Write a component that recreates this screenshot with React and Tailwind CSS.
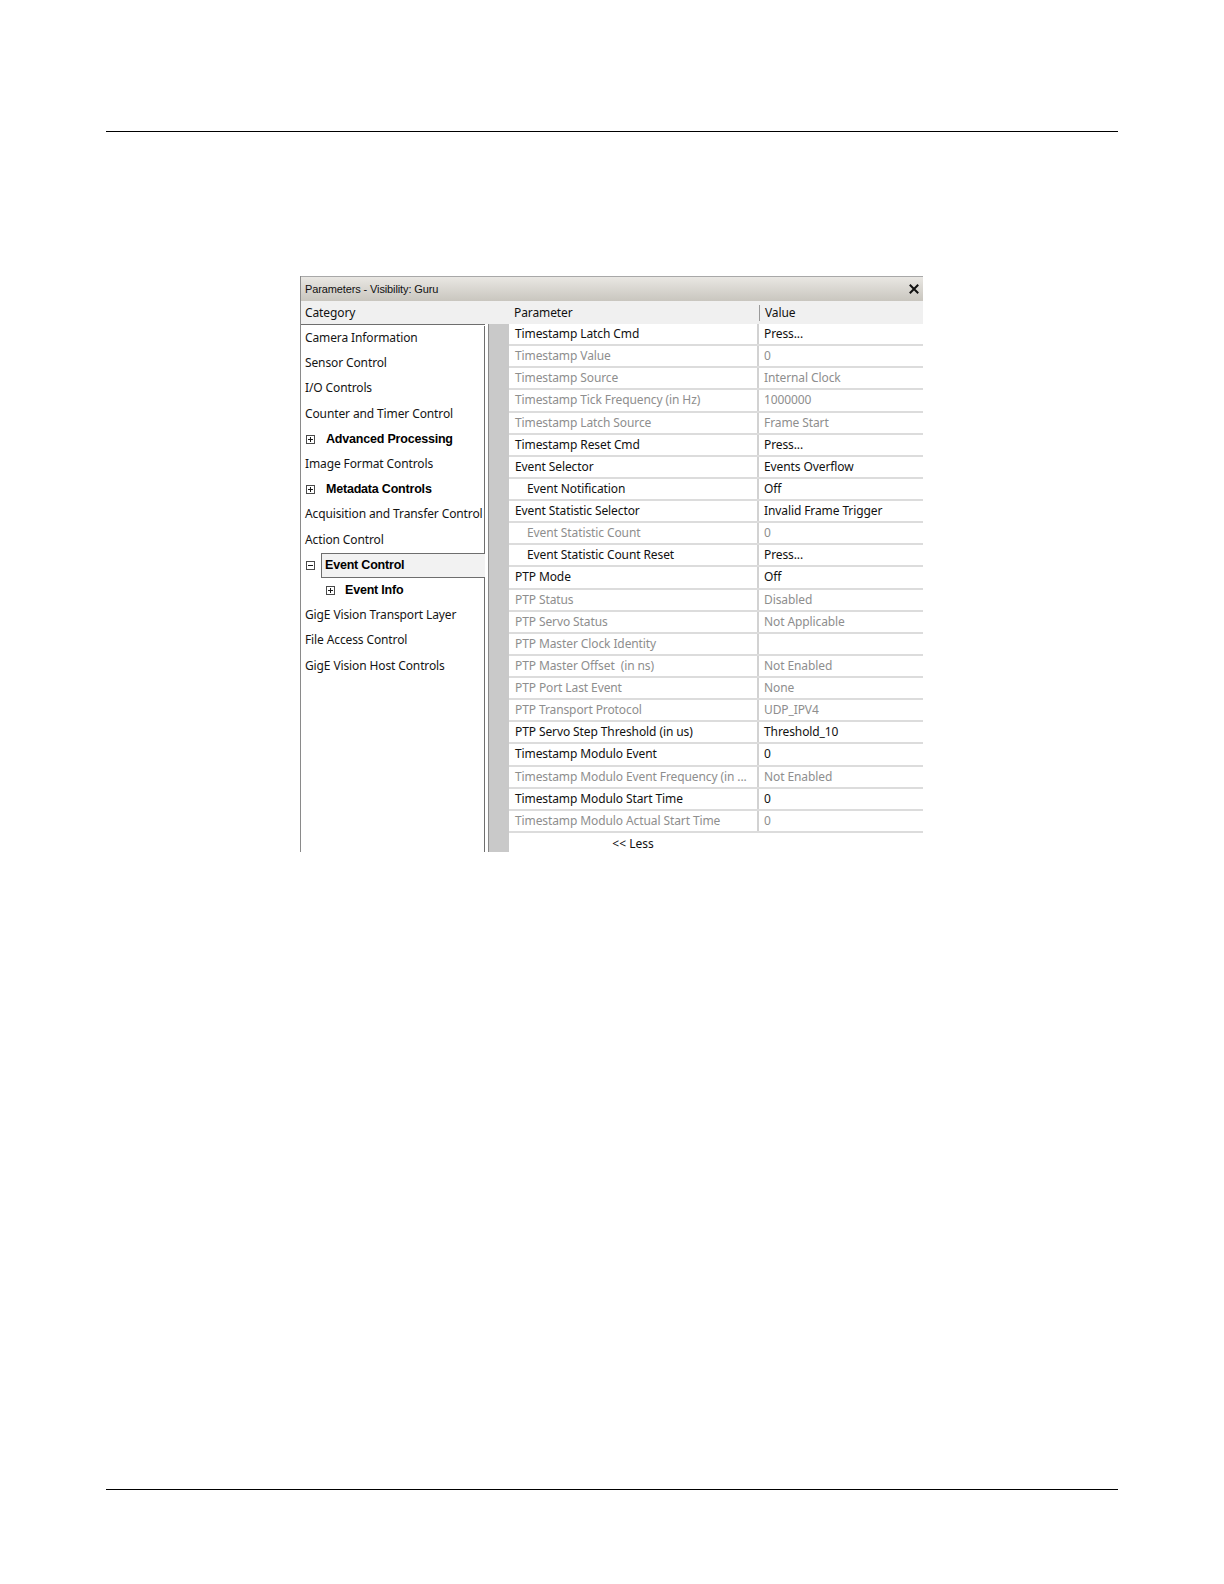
import React from "react";

const categories = [
  { label: "Camera Information" },
  { label: "Sensor Control" },
  { label: "I/O Controls" },
  { label: "Counter and Timer Control" },
  { label: "Advanced Processing", icon: "plus", bold: true },
  { label: "Image Format Controls" },
  { label: "Metadata Controls", icon: "plus", bold: true },
  { label: "Acquisition and Transfer Control" },
  { label: "Action Control" },
  { label: "Event Control", icon: "minus", bold: true, selected: true },
  { label: "Event Info", icon: "plus", bold: true, child: true },
  { label: "GigE Vision Transport Layer" },
  { label: "File Access Control" },
  { label: "GigE Vision Host Controls" },
];

// [name, value, enabled, indented]
const params = [
  ["Timestamp Latch Cmd", "Press...", true],
  ["Timestamp Value", "0", false],
  ["Timestamp Source", "Internal Clock", false],
  ["Timestamp Tick Frequency (in Hz)", "1000000", false],
  ["Timestamp Latch Source", "Frame Start", false],
  ["Timestamp Reset Cmd", "Press...", true],
  ["Event Selector", "Events Overflow", true],
  ["Event Notification", "Off", true, true],
  ["Event Statistic Selector", "Invalid Frame Trigger", true],
  ["Event Statistic Count", "0", false, true],
  ["Event Statistic Count Reset", "Press...", true, true],
  ["PTP Mode", "Off", true],
  ["PTP Status", "Disabled", false],
  ["PTP Servo Status", "Not Applicable", false],
  ["PTP Master Clock Identity", "", false],
  ["PTP Master Offset  (in ns)", "Not Enabled", false],
  ["PTP Port Last Event", "None", false],
  ["PTP Transport Protocol", "UDP_IPV4", false],
  ["PTP Servo Step Threshold (in us)", "Threshold_10", true],
  ["Timestamp Modulo Event", "0", true],
  ["Timestamp Modulo Event Frequency (in ...", "Not Enabled", false],
  ["Timestamp Modulo Start Time", "0", true],
  ["Timestamp Modulo Actual Start Time", "0", false],
];

const uiFont = { fontFamily: '"Noto Sans", "Open Sans", sans-serif' };

function TreeBox({ type }) {
  return (
    <svg width="9" height="9" viewBox="0 0 9 9" className="shrink-0">
      <rect x="0.5" y="0.5" width="8" height="8" fill="white" stroke="#4a4a4a" />
      <line x1="2" y1="4.5" x2="7" y2="4.5" stroke="#1a1a1a" />
      {type === "plus" && <line x1="4.5" y1="2" x2="4.5" y2="7" stroke="#1a1a1a" />}
    </svg>
  );
}

function CategoryRow({ item }) {
  const label = item.bold ? (
    <span className="font-['Liberation_Sans',Arial,sans-serif] font-bold text-[12.5px] tracking-[-0.2px] text-black whitespace-nowrap">
      {item.label}
    </span>
  ) : (
    <span className="text-[12px] tracking-[-0.12px] text-[#151515] whitespace-nowrap">{item.label}</span>
  );

  if (item.selected) {
    return (
      <div className="h-[25.2px] shrink-0 flex items-stretch">
        <div className="w-[20px] flex items-center pl-[5px]">
          <TreeBox type={item.icon} />
        </div>
        <div className="flex-1 flex items-center pl-[3px] bg-[#f2f2f2] border border-r-0 border-[#6e6e6e]">
          {label}
        </div>
      </div>
    );
  }

  return (
    <div className="h-[25.2px] shrink-0 flex items-center border-r border-[#6e6e6e] overflow-hidden">
      {item.icon ? (
        <div className={`flex items-center ${item.child ? "pl-[25px] gap-[10px]" : "pl-[5px] gap-[11px]"}`}>
          <TreeBox type={item.icon} />
          {label}
        </div>
      ) : (
        <div className="pl-[4px] pb-[5px]">{label}</div>
      )}
    </div>
  );
}

function ParamRow({ row }) {
  const [name, value, enabled, indent] = row;
  const color = enabled ? "text-[#111]" : "text-[#8e8e8e]";
  return (
    <div className={`h-[22.14px] shrink-0 flex border-b-2 border-[#dcdcdc] text-[12px] tracking-[-0.1px] ${color}`}>
      <div className={`w-[248px] flex items-center whitespace-pre overflow-hidden ${indent ? "pl-[18px]" : "pl-[6px]"}`}>
        {name}
      </div>
      <div className="flex-1 flex items-center pl-[5px] border-l-2 border-[#d2d2d2] whitespace-nowrap">
        {value}
      </div>
    </div>
  );
}

export default function App() {
  return (
    <div className="w-[1224px] h-[1584px] bg-white flex flex-col" style={uiFont}>
      <div className="mt-[131px] ml-[106px] w-[1012px] h-px bg-black" />

      <div className="mt-[144px] ml-[300px] w-[623px] h-[576px] flex flex-col border-l border-[#8a8a8a] overflow-hidden">
        {/* title bar */}
        <div className="h-[25px] shrink-0 flex items-center justify-between pl-[4px] pr-[4px] border-t border-[#a8a8a8] bg-gradient-to-b from-[#e9e7e3] to-[#c9c6bf]">
          <span className="font-['Liberation_Sans',Arial,sans-serif] text-[11px] tracking-[-0.12px] text-[#111]">
            Parameters - Visibility: Guru
          </span>
          <svg width="10" height="10" viewBox="0 0 10 10">
            <path d="M1.5 1.5 L8.5 8.5 M8.5 1.5 L1.5 8.5" stroke="#111" strokeWidth="2" strokeLinecap="square" />
          </svg>
        </div>

        {/* column headers */}
        <div className="h-[23px] shrink-0 flex bg-[#f0f0f0] text-[12px] tracking-[-0.1px] text-[#111]">
          <div className="w-[207px] flex items-center pl-[4px]">Category</div>
          <div className="w-[251px] flex items-center pl-[6px]">Parameter</div>
          <div className="flex-1 flex items-center">
            <div className="h-[16px] border-l border-[#9a9a9a]" />
            <span className="pl-[5px]">Value</span>
          </div>
        </div>

        {/* body */}
        <div className="flex-1 flex min-h-0 overflow-hidden">
          <div className="w-[184px] flex flex-col border-t border-[#6e6e6e] pt-px">
            {categories.map((c) => (
              <CategoryRow key={c.label} item={c} />
            ))}
            <div className="flex-1 border-r border-[#6e6e6e]" />
          </div>
          <div className="w-[3px]" />
          <div className="w-[21px] border-l border-[#8a8a8a] bg-[#c9c9c9]" />
          <div className="flex-1 flex flex-col bg-white">
            {params.map((r) => (
              <ParamRow key={r[0]} row={r} />
            ))}
            <div className="h-[22px] shrink-0 w-[248px] flex items-center justify-center text-[12px] text-[#111]">
              &lt;&lt; Less
            </div>
          </div>
        </div>
      </div>

      <div className="mt-[637px] ml-[106px] w-[1012px] h-px bg-black" />
    </div>
  );
}
